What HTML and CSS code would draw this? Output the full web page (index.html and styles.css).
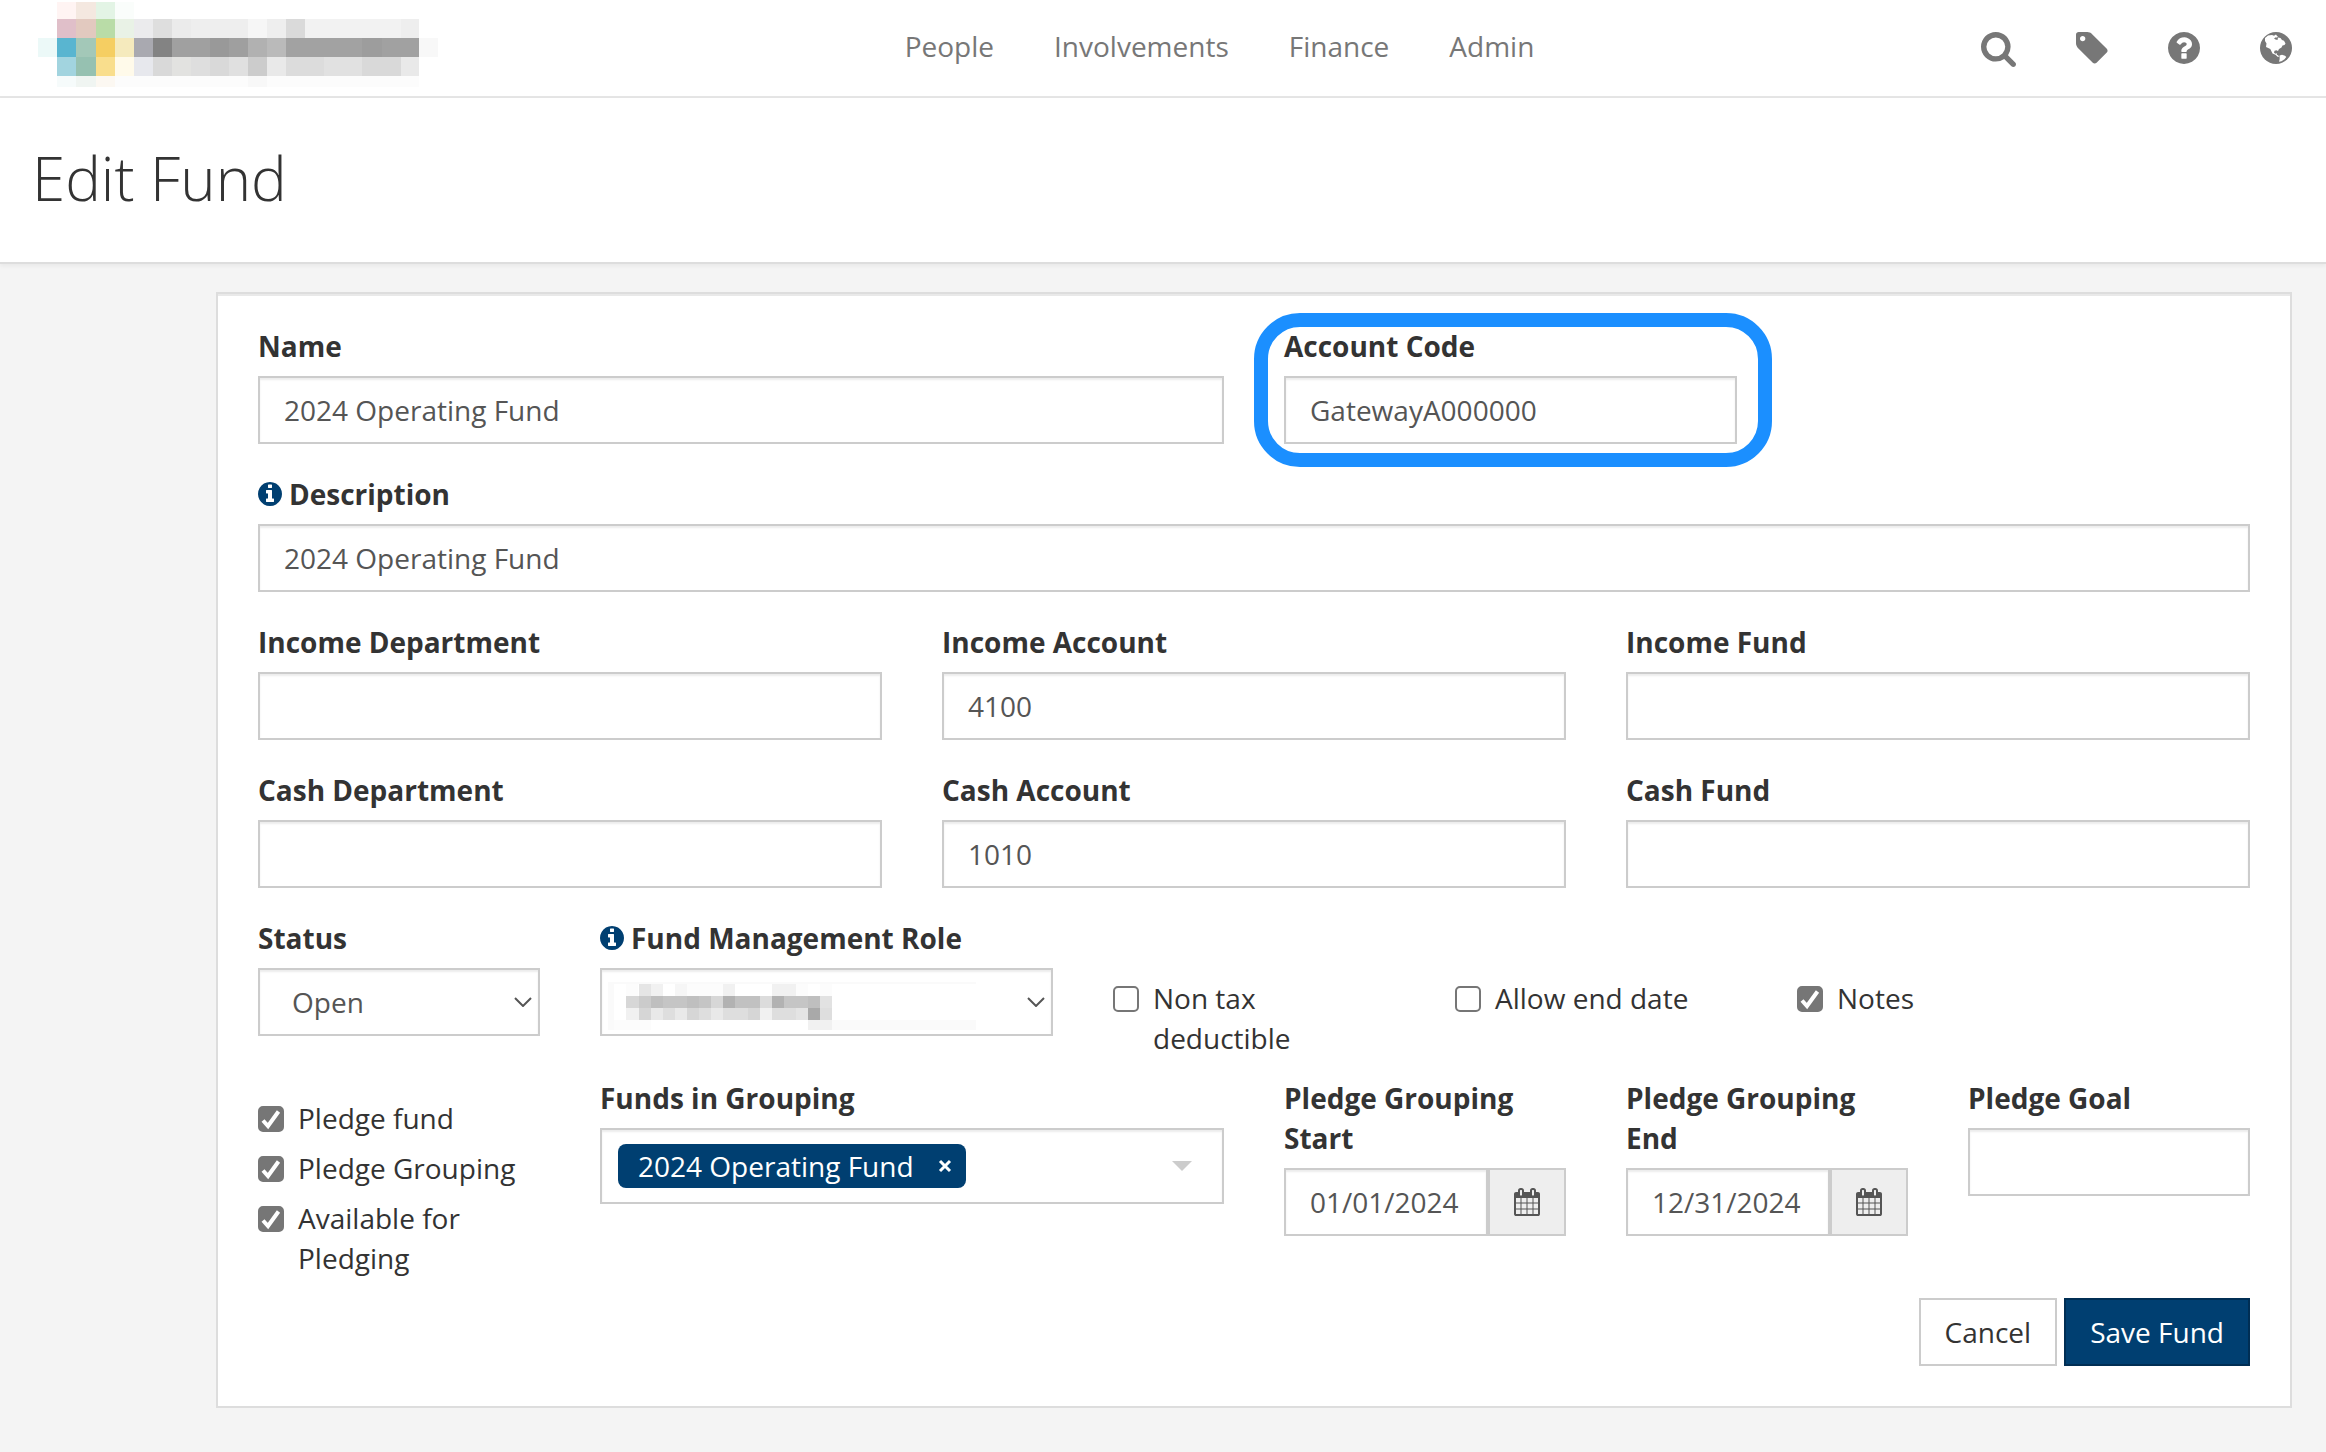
FILE: index.html
```
<!DOCTYPE html>
<html lang="en">

<head>
    <meta charset="UTF-8">
    <meta name="viewport" content="width=device-width, initial-scale=1.0">
    <title>Edit Fund</title>
    <link rel="stylesheet" href="styles.css">
</head>

<body>

    <!-- Shared icons -->
    <svg class="sprite" aria-hidden="true">
        <symbol id="icon-info" viewBox="128 128 1536 1536">
            <path d="M1152 1376v-160q0-14-9-23t-23-9h-96v-512q0-14-9-23t-23-9h-320q-14 0-23 9t-9 23v160q0 14 9 23t23 9h96v320h-96q-14 0-23 9t-9 23v160q0 14 9 23t23 9h448q14 0 23-9t9-23zm-128-896v-160q0-14-9-23t-23-9h-192q-14 0-23 9t-9 23v160q0 14 9 23t23 9h192q14 0 23-9t9-23zm640 416q0 209-103 385.5t-279.5 279.5-385.5 103-385.5-103-279.5-279.5-103-385.5 103-385.5 279.5-279.5 385.5-103 385.5 103 279.5 279.5 103 385.5z"/>
        </symbol>
        <symbol id="icon-calendar" viewBox="0 0 1664 1792">
            <path d="M128 1664h288v-288h-288v288zm352 0h320v-288h-320v288zm-352-352h288v-320h-288v320zm352 0h320v-320h-320v320zm-352-384h288v-288h-288v288zm736 736h320v-288h-320v288zm-384-736h320v-288h-320v288zm768 736h288v-288h-288v288zm-384-352h320v-320h-320v320zm-352-864v-288q0-13-9.5-22.5t-22.5-9.5h-64q-13 0-22.5 9.5t-9.5 22.5v288q0 13 9.5 22.5t22.5 9.5h64q13 0 22.5-9.5t9.5-22.5zm736 864h288v-320h-288v320zm-384-384h320v-288h-320v288zm384 0h288v-288h-288v288zm32-480v-288q0-13-9.5-22.5t-22.5-9.5h-64q-13 0-22.5 9.5t-9.5 22.5v288q0 13 9.5 22.5t22.5 9.5h64q13 0 22.5-9.5t9.5-22.5zm384-64v1280q0 52-38 90t-90 38h-1408q-52 0-90-38t-38-90v-1280q0-52 38-90t90-38h128v-96q0-66 47-113t113-47h64q66 0 113 47t47 113v96h384v-96q0-66 47-113t113-47h64q66 0 113 47t47 113v96h128q52 0 90 38t38 90z"/>
        </symbol>
        <symbol id="icon-chevron" viewBox="0 0 18 10">
            <path d="M1 1l8 8 8-8" fill="none" stroke="currentColor" stroke-width="2"/>
        </symbol>
    </svg>

    <header class="navbar">
        <a class="brand" href="#" aria-label="Home">
            <svg width="458" height="96" viewBox="0 0 458 96" shape-rendering="crispEdges">
                <!-- top row -->
                <path fill="#fff4f3" d="M57 2h19v17H57z"/>
                <path fill="#f4e8e0" d="M76 2h20v17H76z"/>
                <path fill="#e3f4e5" d="M96 2h19v17H96z"/>
                <path fill="#fafdfb" d="M115 2h19v17h-19z"/>
                <!-- second row -->
                <path fill="#e0bfc9" d="M57 19h19v19H57z"/>
                <path fill="#e2c9bf" d="M76 19h20v19H76z"/>
                <path fill="#b9dca7" d="M96 19h19v19H96z"/>
                <path fill="#e9f2e6" d="M115 19h19v19h-19z"/>
                <path fill="#ebebed" d="M134 19h19v19h-19z"/>
                <path fill="#dedede" d="M153 19h19v19h-19z"/>
                <path fill="#ebebeb" d="M172 19h19v19h-19z"/>
                <path fill="#eeeeee" d="M191 19h57v19h-57z"/>
                <path fill="#f6f6f6" d="M248 19h19v19h-19z"/>
                <path fill="#eeeeee" d="M267 19h19v19h-19z"/>
                <path fill="#dadada" d="M286 19h19v19h-19z"/>
                <path fill="#f2f2f2" d="M305 19h96v19h-96z"/>
                <path fill="#eeeeee" d="M401 19h18v19h-18z"/>
                <!-- third row -->
                <path fill="#ecf9f8" d="M38 38h19v19H38z"/>
                <path fill="#59b5d0" d="M57 38h19v19H57z"/>
                <path fill="#a3c8b8" d="M76 38h20v19H76z"/>
                <path fill="#f5ce62" d="M96 38h19v19H96z"/>
                <path fill="#f5eabd" d="M115 38h19v19h-19z"/>
                <path fill="#a9a9b0" d="M134 38h19v19h-19z"/>
                <path fill="#838383" d="M153 38h19v19h-19z"/>
                <path fill="#a0a0a0" d="M172 38h38v19h-38z"/>
                <path fill="#999999" d="M210 38h19v19h-19z"/>
                <path fill="#9f9f9f" d="M229 38h19v19h-19z"/>
                <path fill="#b1b1b1" d="M248 38h19v19h-19z"/>
                <path fill="#bababa" d="M267 38h19v19h-19z"/>
                <path fill="#a2a2a2" d="M286 38h76v19h-76z"/>
                <path fill="#9d9d9d" d="M362 38h20v19h-20z"/>
                <path fill="#a1a1a1" d="M382 38h37v19h-37z"/>
                <path fill="#f8f8f8" d="M419 38h19v19h-19z"/>
                <!-- fourth row -->
                <path fill="#a2d4df" d="M57 57h19v19H57z"/>
                <path fill="#96c1b1" d="M76 57h20v19H76z"/>
                <path fill="#f9de8d" d="M96 57h19v19H96z"/>
                <path fill="#fffaea" d="M115 57h19v19h-19z"/>
                <path fill="#e7e8ed" d="M134 57h19v19h-19z"/>
                <path fill="#d9d9d9" d="M153 57h19v19h-19z"/>
                <path fill="#e2e2e0" d="M172 57h19v19h-19z"/>
                <path fill="#dedede" d="M191 57h19v19h-19z"/>
                <path fill="#d9d9d9" d="M210 57h19v19h-19z"/>
                <path fill="#e0e0e0" d="M229 57h19v19h-19z"/>
                <path fill="#cccccc" d="M248 57h19v19h-19z"/>
                <path fill="#e9e9e9" d="M267 57h19v19h-19z"/>
                <path fill="#dcdcdc" d="M286 57h38v19h-38z"/>
                <path fill="#e1e1e1" d="M324 57h38v19h-38z"/>
                <path fill="#d9d9d9" d="M362 57h39v19h-39z"/>
                <path fill="#e9e9e9" d="M401 57h18v19h-18z"/>
                <!-- bottom row -->
                <path fill="#f6fbfb" d="M57 76h19v11H57z"/>
                <path fill="#f0f5f2" d="M76 76h20v11H76z"/>
                <path fill="#fcf8f2" d="M96 76h19v11H96z"/>
                <path fill="#fcfcfc" d="M115 76h304v11H115z"/>
                <path fill="#f8f8f8" d="M248 76h19v11h-19z"/>
            </svg>
        </a>

        <nav class="main-nav">
            <a href="#">People</a>
            <a href="#">Involvements</a>
            <a href="#">Finance</a>
            <a href="#">Admin</a>
        </nav>

        <div class="tools">
            <a class="tool" href="#" aria-label="Search">
                <svg width="35" height="35" viewBox="64 128 1664 1664">
                    <path d="M1216 832q0-185-131.5-316.5t-316.5-131.5-316.5 131.5-131.5 316.5 131.5 316.5 316.5 131.5 316.5-131.5 131.5-316.5zm512 832q0 52-38 90t-90 38q-54 0-90-38l-343-342q-179 124-399 124-143 0-273.5-55.5t-225-150-150-225-55.5-273.5 55.5-273.5 150-225 225-150 273.5-55.5 273.5 55.5 225 150 150 225 55.5 273.5q0 220-124 399l343 343q37 37 37 90z"/>
                </svg>
            </a>
            <a class="tool" href="#" aria-label="Tags">
                <svg width="32" height="32" viewBox="128 128 1536 1536">
                    <path d="M576 448q0-53-37.5-90.5t-90.5-37.5-90.5 37.5-37.5 90.5 37.5 90.5 90.5 37.5 90.5-37.5 37.5-90.5zm1067 576q0 53-37 90l-491 492q-39 37-91 37-53 0-90-37l-715-716q-38-37-64.5-101t-26.5-117v-416q0-52 38-90t90-38h416q53 0 117 26.5t102 64.5l715 714q37 39 37 91z"/>
                </svg>
            </a>
            <a class="tool" href="#" aria-label="Help">
                <svg width="32" height="32" viewBox="128 128 1536 1536">
                    <path d="M1024 1376v-192q0-14-9-23t-23-9h-192q-14 0-23 9t-9 23v192q0 14 9 23t23 9h192q14 0 23-9t9-23zm256-672q0-88-55.5-163t-138.5-116-170-41q-243 0-371 213-15 24 8 42l132 100q7 6 19 6 16 0 25-12 53-68 86-92 34-24 86-24 48 0 85.5 26t37.5 59q0 38-20 61t-68 45q-63 28-115.5 86.5t-52.5 125.5v36q0 14 9 23t23 9h192q14 0 23-9t9-23q0-19 21.5-49.5t54.5-49.5q32-18 49-28.5t46-35 44.5-48 28-60.5 12.5-81zm384 192q0 209-103 385.5t-279.5 279.5-385.5 103-385.5-103-279.5-279.5-103-385.5 103-385.5 279.5-279.5 385.5-103 385.5 103 279.5 279.5 103 385.5z"/>
                </svg>
            </a>
            <a class="tool" href="#" aria-label="Language">
                <svg width="32" height="32" viewBox="0 0 32 32">
                    <circle cx="16" cy="16" r="16"/>
                    <path fill="#fff" d="M5 6l3-2.500 4-.5 2 .8 2-1.300 1 1.500-1.500 1.500-1.500 1 1.500 1 2 .5.500-2.500 2.500.5 1.500 2 2 .8 1.500 2.700-1 1.500-2 .5-1 2-2.500 1.500-1 2-1.500-.8-2 .5-.5 2 1.500 1 1.500-.5-.2 1.500 1.400.6.800 1.700-1.500-.3-2-2-3-1.200-2.200-4.500L6 15l.5-3.500L5 9z"/>
                    <path fill="#fff" d="M14.500 4.500l2-.8 1.500.8-1 1.200zM19.500 23.500l2.500-.7 3 1 1.300 1.200-1.800 2.200-3 2-2.500.5.700-2.700z"/>
                </svg>
            </a>
        </div>
    </header>

    <div class="page-header">
        <h1>Edit Fund</h1>
    </div>

    <main class="content">
        <form class="fund-form">

            <div class="field col-6">
                <label for="name">Name</label>
                <input type="text" id="name" value="2024 Operating Fund">
            </div>
            <div class="field col-3 highlight">
                <label for="accountCode">Account Code</label>
                <input type="text" id="accountCode" value="GatewayA000000">
            </div>

            <div class="field col-12">
                <label for="description"><svg class="info"><use href="#icon-info"/></svg>Description</label>
                <input type="text" id="description" value="2024 Operating Fund">
            </div>

            <div class="field col-4">
                <label for="incomeDepartment">Income Department</label>
                <input type="text" id="incomeDepartment">
            </div>
            <div class="field col-4">
                <label for="incomeAccount">Income Account</label>
                <input type="text" id="incomeAccount" value="4100">
            </div>
            <div class="field col-4">
                <label for="incomeFund">Income Fund</label>
                <input type="text" id="incomeFund">
            </div>

            <div class="field col-4">
                <label for="cashDepartment">Cash Department</label>
                <input type="text" id="cashDepartment">
            </div>
            <div class="field col-4">
                <label for="cashAccount">Cash Account</label>
                <input type="text" id="cashAccount" value="1010">
            </div>
            <div class="field col-4">
                <label for="cashFund">Cash Fund</label>
                <input type="text" id="cashFund">
            </div>

            <!-- Status, role and options -->
            <div class="field col-2">
                <label for="status">Status</label>
                <div class="select">
                    <select id="status">
                        <option>Open</option>
                    </select>
                    <svg class="chevron"><use href="#icon-chevron"/></svg>
                </div>
            </div>
            <div class="field col-3">
                <label for="role"><svg class="info"><use href="#icon-info"/></svg>Fund Management Role</label>
                <div class="select">
                    <select id="role">
                        <option value=""></option>
                    </select>
                    <svg class="redacted" viewBox="0 0 370 48" shape-rendering="crispEdges">
                        <path fill="#fafafa" d="M0 0h6v48H0zM0 0h368v2H0zM224 38h144v10H224z"/>
                        <path fill="#fcfcfc" d="M6 38h37v10H6zM18 2h12v12H18zM79 2h36v12H79zM188 2h12v12h-12zM212 2h12v12h-12z"/>
                        <path fill="#e5e5e5" d="M31 2h12v12H31z"/>
                        <path fill="#f1f1f1" d="M43 2h12v12H43zM115 2h12v12h-12zM164 2h24v12h-24z"/>
                        <path fill="#f6f6f6" d="M67 2h12v12H67z"/>
                        <path fill="#d7d7d7" d="M18 14h13v12H18zM103 14h12v12h-12z"/>
                        <path fill="#cbcbcb" d="M31 14h12v12H31z"/>
                        <path fill="#bfbfbf" d="M43 14h12v12H43zM79 14h12v12H79zM200 14h12v12h-12z"/>
                        <path fill="#c5c5c5" d="M55 14h24v12H55zM91 14h12v12H91zM176 14h24v12h-24z"/>
                        <path fill="#b2b2b2" d="M115 14h12v12h-12zM164 14h12v12h-12z"/>
                        <path fill="#c1c1c1" d="M127 14h25v12h-25z"/>
                        <path fill="#dcdcdc" d="M152 14h12v12h-12z"/>
                        <path fill="#e2e2e2" d="M212 14h12v12h-12z"/>
                        <path fill="#f1f1f1" d="M18 26h13v12H18zM152 26h12v12h-12z"/>
                        <path fill="#d6d6d6" d="M31 26h12v12H31zM79 26h12v12H79zM140 26h12v12h-12z"/>
                        <path fill="#e9e9e9" d="M43 26h12v12H43zM67 26h12v12H67zM103 26h12v12h-12z"/>
                        <path fill="#dedede" d="M55 26h12v12H55zM91 26h12v12H91zM115 26h25v12h-25zM164 26h24v12h-24zM212 26h12v12h-12z"/>
                        <path fill="#e4e4e4" d="M188 26h12v12h-12z"/>
                        <path fill="#a9a9a9" d="M200 26h12v12h-12z"/>
                        <path fill="#f1f1f1" d="M200 38h24v10h-24z"/>
                    </svg>
                    <svg class="chevron"><use href="#icon-chevron"/></svg>
                </div>
            </div>
            <div class="checks checks-low col-2">
                <label class="check"><input type="checkbox"><span>Non tax deductible</span></label>
            </div>
            <div class="checks checks-low col-2">
                <label class="check"><input type="checkbox"><span>Allow end date</span></label>
            </div>
            <div class="checks checks-low col-2">
                <label class="check"><input type="checkbox" checked><span>Notes</span></label>
            </div>

            <!-- Pledge settings -->
            <div class="checks col-2">
                <label class="check"><input type="checkbox" checked><span>Pledge fund</span></label>
                <label class="check"><input type="checkbox" checked><span>Pledge Grouping</span></label>
                <label class="check"><input type="checkbox" checked><span>Available for Pledging</span></label>
            </div>
            <div class="field col-4">
                <label id="groupingLabel">Funds in Grouping</label>
                <div class="multiselect" role="group" aria-labelledby="groupingLabel">
                    <span class="tag">2024 Operating Fund
                        <button type="button" class="tag-remove" aria-label="Remove 2024 Operating Fund">
                            <svg width="14" height="14" viewBox="0 0 14 14"><path d="M2 2l10 10M12 2L2 12" stroke="#fff" stroke-width="3"/></svg>
                        </button>
                    </span>
                    <span class="caret"></span>
                </div>
            </div>
            <div class="field col-2">
                <label for="groupingStart">Pledge Grouping Start</label>
                <div class="input-group">
                    <input type="text" id="groupingStart" value="01/01/2024">
                    <button type="button" class="addon" aria-label="Pick start date"><svg class="calendar"><use href="#icon-calendar"/></svg></button>
                </div>
            </div>
            <div class="field col-2">
                <label for="groupingEnd">Pledge Grouping End</label>
                <div class="input-group">
                    <input type="text" id="groupingEnd" value="12/31/2024">
                    <button type="button" class="addon" aria-label="Pick end date"><svg class="calendar"><use href="#icon-calendar"/></svg></button>
                </div>
            </div>
            <div class="field col-2">
                <label for="goal">Pledge Goal</label>
                <input type="text" id="goal">
            </div>

            <div class="actions col-12">
                <button type="button" class="btn">Cancel</button>
                <button type="submit" class="btn btn-primary">Save Fund</button>
            </div>
        </form>
    </main>

</body>

</html>
```
FILE: styles.css
```
* {
    margin: 0;
    padding: 0;
    box-sizing: border-box;
}

body {
    font-family: "Open Sans", sans-serif;
    font-size: 28px;
    line-height: 40px;
    color: #333;
    background-color: #f4f4f4;
}

input,
select,
button {
    font: inherit;
    color: inherit;
}

svg {
    display: block;
    fill: currentColor;
}

.sprite {
    position: absolute;
    width: 0;
    height: 0;
}

/* Top navigation */
.navbar {
    display: flex;
    justify-content: space-between;
    background-color: #fff;
    border-bottom: 2px solid #e5e5e5;
    color: #777;
}

.navbar a {
    color: inherit;
    text-decoration: none;
}

.main-nav {
    display: flex;
    gap: 60px;
    padding-top: 26px;
}

.tools {
    display: flex;
    gap: 60px;
    padding: 32px 34px 0 0;
}

/* Page title */
.page-header {
    padding: 38px 32px 42px;
    background-color: #fff;
    border-bottom: 2px solid #ddd;
    box-shadow: 0 2px 4px rgba(0, 0, 0, 0.05);
}

h1 {
    font-size: 60px;
    font-weight: 300;
    line-height: 84px;
}

/* Form card */
.content {
    padding: 28px 34px 40px 216px;
}

.fund-form {
    display: grid;
    grid-template-columns: repeat(12, minmax(0, 1fr));
    column-gap: 60px;
    align-items: start;
    padding: 32px 40px 40px;
    background-color: #fff;
    border: 2px solid #ddd;
    box-shadow: inset 0 2px 0 #e9e9e9;
}

.col-2 { grid-column: span 2; }
.col-3 { grid-column: span 3; }
.col-4 { grid-column: span 4; }
.col-6 { grid-column: span 6; }
.col-12 { grid-column: span 12; }

.field {
    margin-bottom: 30px;
}

.field label {
    display: flex;
    align-items: center;
    gap: 7px;
    margin-bottom: 10px;
    font-weight: 700;
}

.info {
    width: 24px;
    height: 24px;
    color: #003f71;
}

input[type="text"],
select,
.multiselect {
    display: block;
    width: 100%;
    height: 68px;
    padding: 0 24px;
    color: #555;
    background-color: #fff;
    border: 2px solid #ccc;
    border-radius: 0;
    box-shadow: inset 0 2px 2px rgba(0, 0, 0, 0.075);
}

/* Ring around the account code */
.highlight {
    position: relative;
}

.highlight::after {
    content: "";
    position: absolute;
    inset: -13px -35px -23px -30px;
    border: 14px solid #1b8fff;
    border-radius: 46px;
    pointer-events: none;
}

/* Drop-downs */
.select {
    position: relative;
}

select {
    appearance: none;
    padding: 0 32px;
}

.chevron {
    position: absolute;
    top: 29px;
    right: 8px;
    width: 18px;
    height: 10px;
    color: #555;
    pointer-events: none;
}

.redacted {
    position: absolute;
    top: 14px;
    left: 8px;
    width: 370px;
    height: 48px;
    pointer-events: none;
}

/* Check boxes */
.checks {
    display: flex;
    flex-direction: column;
    gap: 10px;
    padding: 20px 0;
}

.checks-low {
    padding-top: 60px;
}

.check {
    display: flex;
    align-items: flex-start;
    gap: 14px;
}

input[type="checkbox"] {
    appearance: none;
    flex: none;
    width: 26px;
    height: 26px;
    margin-top: 8px;
    background-color: #fff;
    border: 2px solid #767676;
    border-radius: 5px;
}

input[type="checkbox"]:checked {
    background: #767676 url("data:image/svg+xml,%3Csvg xmlns='http://www.w3.org/2000/svg' viewBox='0 0 22 22'%3E%3Cpath d='M3 12.500l5 5.500L18.500 3.500' fill='none' stroke='%23fff' stroke-width='4'/%3E%3C/svg%3E") center / 22px no-repeat;
}

/* Funds in grouping */
.multiselect {
    display: flex;
    align-items: center;
    justify-content: space-between;
    height: 76px;
    padding: 0 30px 0 16px;
}

.tag {
    display: flex;
    align-items: center;
    gap: 24px;
    height: 44px;
    padding: 0 14px 0 20px;
    color: #fff;
    background-color: #003f71;
    border-radius: 8px;
}

.tag-remove {
    background: none;
    border: none;
    cursor: pointer;
}

.caret {
    border: 10px solid transparent;
    border-top-color: #ccc;
    border-bottom: none;
}

/* Date inputs */
.input-group {
    display: flex;
}

.input-group input {
    flex: 1;
    min-width: 0;
}

.addon {
    display: flex;
    align-items: center;
    justify-content: center;
    width: 78px;
    color: #555;
    background-color: #eee;
    border: 2px solid #ccc;
}

.calendar {
    width: 26px;
    height: 28px;
}

/* Buttons */
.actions {
    display: flex;
    justify-content: flex-end;
    gap: 7px;
}

.btn {
    height: 68px;
    padding: 0 24px;
    background-color: #fff;
    border: 2px solid #ccc;
    cursor: pointer;
}

.btn-primary {
    color: #fff;
    background-color: #003f71;
    border-color: #002e54;
}
```
